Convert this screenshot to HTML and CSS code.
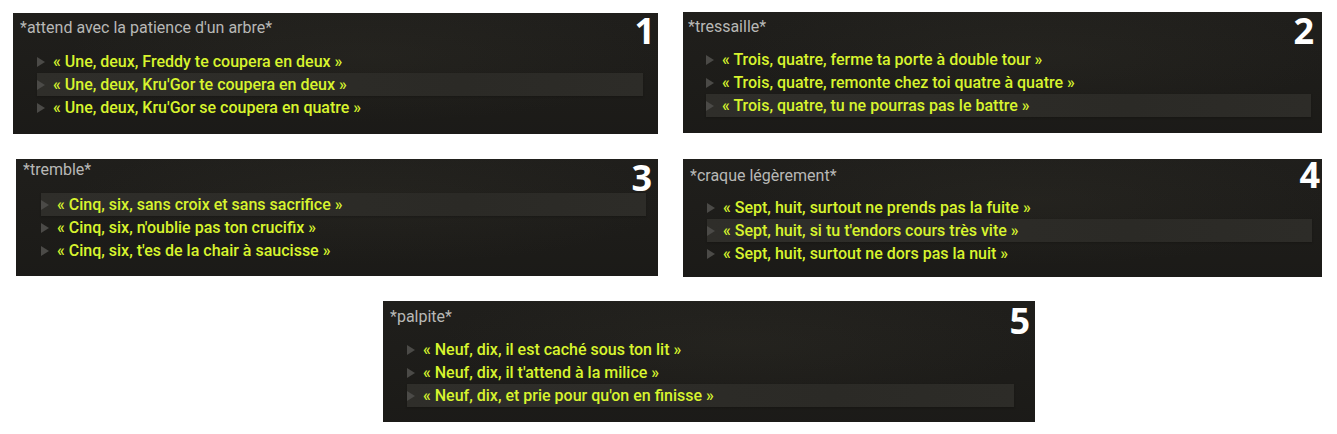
FILE: index.html
```html
<!DOCTYPE html>
<html lang="fr">
<head>
  <meta charset="UTF-8" />
  <title>Comptine – choix de dialogue</title>
  <link rel="stylesheet" href="styles.css">
</head>
<body>
  <div class="board">
    <div class="board-row row-top">
      <section class="panel panel-1">
        <p class="panel-title">*attend avec la patience d'un arbre*</p>
        <ul class="choices">
          <li class="choice">« Une, deux, Freddy te coupera en deux »</li>
          <li class="choice is-hover">« Une, deux, Kru'Gor te coupera en deux »</li>
          <li class="choice">« Une, deux, Kru'Gor se coupera en quatre »</li>
        </ul>
        <span class="panel-num">1</span>
      </section>

      <section class="panel panel-2">
        <p class="panel-title">*tressaille*</p>
        <ul class="choices">
          <li class="choice">« Trois, quatre, ferme ta porte à double tour »</li>
          <li class="choice">« Trois, quatre, remonte chez toi quatre à quatre »</li>
          <li class="choice is-hover">« Trois, quatre, tu ne pourras pas le battre »</li>
        </ul>
        <span class="panel-num">2</span>
      </section>
    </div>

    <div class="board-row row-mid">
      <section class="panel panel-3">
        <p class="panel-title">*tremble*</p>
        <ul class="choices">
          <li class="choice is-hover">« Cinq, six, sans croix et sans sacrifice »</li>
          <li class="choice">« Cinq, six, n'oublie pas ton crucifix »</li>
          <li class="choice">« Cinq, six, t'es de la chair à saucisse »</li>
        </ul>
        <span class="panel-num">3</span>
      </section>

      <section class="panel panel-4">
        <p class="panel-title">*craque légèrement*</p>
        <ul class="choices">
          <li class="choice">« Sept, huit, surtout ne prends pas la fuite »</li>
          <li class="choice is-hover">« Sept, huit, si tu t'endors cours très vite »</li>
          <li class="choice">« Sept, huit, surtout ne dors pas la nuit »</li>
        </ul>
        <span class="panel-num">4</span>
      </section>
    </div>

    <div class="board-row row-bottom">
      <section class="panel panel-5">
        <p class="panel-title">*palpite*</p>
        <ul class="choices">
          <li class="choice">« Neuf, dix, il est caché sous ton lit »</li>
          <li class="choice">« Neuf, dix, il t'attend à la milice »</li>
          <li class="choice is-hover">« Neuf, dix, et prie pour qu'on en finisse »</li>
        </ul>
        <span class="panel-num">5</span>
      </section>
    </div>
  </div>
</body>
</html>
```

FILE: styles.css
```css
body {
  margin: 0;
  background: #ffffff;
  font-family: Roboto, "Liberation Sans", sans-serif;
}
.board {
  padding-top: 13px;
}
.board-row {
  display: flex;
  gap: 25px;
}
.row-top {
  padding-left: 13px;
}
.row-mid {
  margin-top: 25px;
  padding-left: 16px;
}
.row-bottom {
  margin-top: 24px;
  padding-left: 383px;
}

.panel {
  position: relative;
  box-sizing: border-box;
  background-color: #1d1c19;
  background-image:
    radial-gradient(ellipse at 55% 35%, rgba(60,58,48,0.2), rgba(0,0,0,0) 60%),
    linear-gradient(180deg, rgba(255,255,255,0.01), rgba(0,0,0,0.06));
  padding: 5px 0 15px 7px;
}
.panel-title {
  margin: 0;
  font-size: 16px;
  line-height: 20px;
  color: #b8b8b6;
}
.choices {
  list-style: none;
  margin: 12px 15px 0 17px;
  padding: 0;
}
.choice {
  display: flex;
  align-items: center;
  height: 23px;
  font-size: 16px;
  font-weight: 500;
  color: #d8f42e;
  white-space: nowrap;
}
.choice::before {
  content: "";
  width: 0;
  height: 0;
  margin-right: 8px;
  border-top: 5px solid transparent;
  border-bottom: 5px solid transparent;
  border-left: 8px solid #4b4a47;
}
.choice.is-hover {
  background: linear-gradient(90deg, #2f2e2a, #2b2a26 70%, #2d2c28);
  box-shadow: 0 1px 2px rgba(0,0,0,0.2);
}
.panel-num {
  position: absolute;
  top: 0;
  right: 3px;
  font-family: "Open Sans", "DejaVu Sans", sans-serif;
  font-weight: 700;
  font-size: 36px;
  line-height: 36px;
  color: #ffffff;
}

/* per-panel sizes */
.panel-1 {
  width: 645px;
  height: 121px;
}
.panel-2 {
  width: 639px;
  height: 121px;
  margin-top: -1px;
  padding-left: 5px;
}
.panel-2 .choices {
  margin: 11px 11px 0 18px;
}
.panel-2 .panel-num {
  right: 8px;
  top: 1px;
}
.panel-3 {
  width: 642px;
  height: 117px;
  padding-top: 1px;
}
.panel-3 .choices {
  margin: 13px 12px 0 18px;
}
.panel-3 .panel-num {
  right: 6px;
  top: 1px;
}
.panel-4 {
  width: 639px;
  height: 118px;
  padding-top: 7px;
}
.panel-4 .choices {
  margin: 10px 10px 0 17px;
}
.panel-4 .panel-num {
  right: 2px;
  top: -2px;
}
.panel-5 {
  width: 652px;
  height: 121px;
  padding-top: 6px;
}
.panel-5 .choices {
  margin: 11px 21px 0 17px;
}
.panel-5 .panel-num {
  right: 5px;
  top: 2px;
}
```
